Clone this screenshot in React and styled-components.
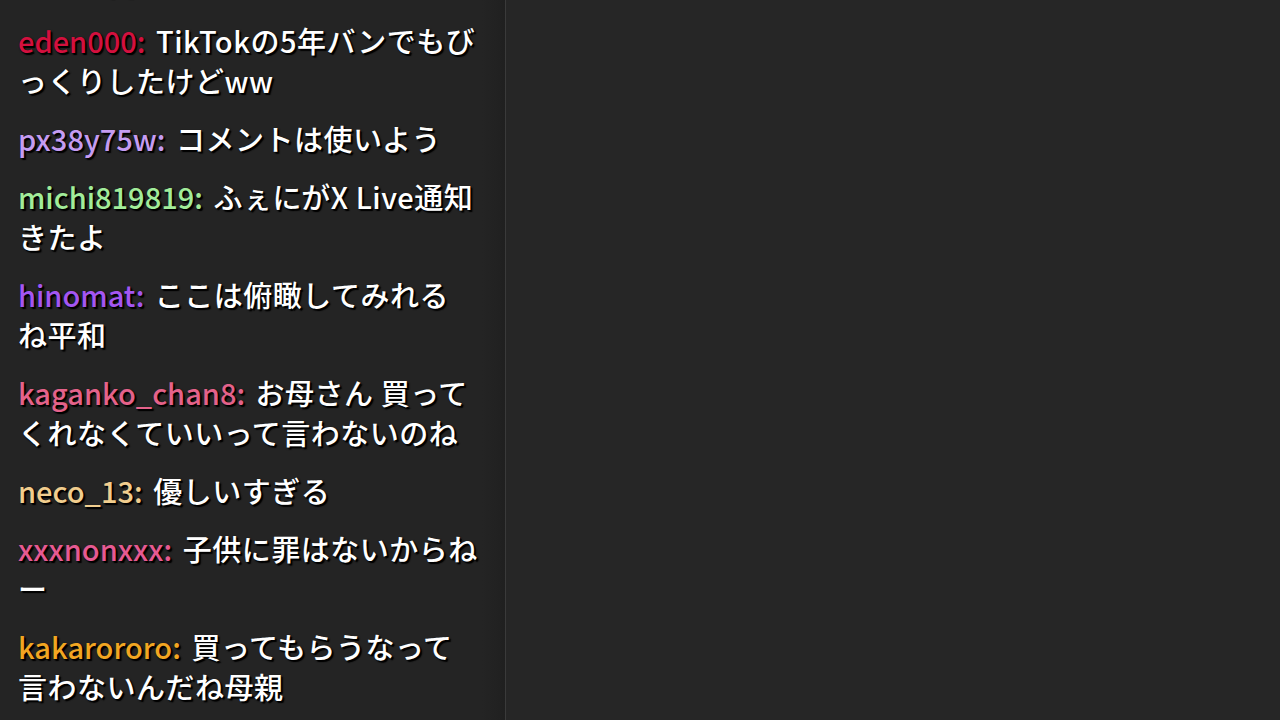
import React from "react";
import styled, { createGlobalStyle } from "styled-components";

const Global = createGlobalStyle`
  html, body { margin: 0; padding: 0; height: 100%; background: #262626; }
  #root { height: 100%; }
`;

const Page = styled.div`
  display: flex;
  width: 1280px;
  height: 720px;
  overflow: hidden;
  background: #262626;
  font-family: "Noto Sans CJK JP", "Noto Sans", sans-serif;
`;

const ChatPanel = styled.div`
  width: 506px;
  flex: none;
  display: flex;
  flex-direction: column;
  justify-content: flex-end;
  padding: 0 26.9px 5px 18px;
  box-sizing: border-box;
  background: linear-gradient(to right, #242424 0, #242424 482px, #212121 500px, #1f1f1f 506px);
  border-right: 1px solid #3a3a3a;
  overflow: hidden;
`;

const Stage = styled.div`
  flex: 1;
  background: #262626;
`;

const Message = styled.div`
  padding: 9px 0;
  font-size: 29px;
  line-height: 40px;
  font-weight: 500;
  letter-spacing: 0.5px;
  color: #ffffff;
  text-shadow: 2px 2px 1px #000, 1px 1px 2px #000;
  line-break: anywhere;
  flex: none;
`;

const Name = styled.span`
  color: ${(p) => p.$color};
  letter-spacing: 0;
  margin-right: 4px;
`;

const messages = [
  { name: null, color: "#fff", text: "すぐに倒される" },
  { name: "eden000", color: "#d3103e", text: "TikTokの5年バンでもびっくりしたけどww" },
  { name: "px38y75w", color: "#c59cf2", text: "コメントは使いよう" },
  { name: "michi819819", color: "#a2ec9a", text: "ふぇにがX Live通知きたよ" },
  { name: "hinomat", color: "#a456f2", text: "ここは俯瞰してみれるね平和" },
  { name: "kaganko_chan8", color: "#e4628a", text: "お母さん 買ってくれなくていいって言わないのね" },
  { name: "neco_13", color: "#f1cd8e", text: "優しいすぎる" },
  { name: "xxxnonxxx", color: "#e65a92", text: "子供に罪はないからねー" },
  { name: "kakarororo", color: "#f2a622", text: "買ってもらうなって言わないんだね母親" },
];

export default function App() {
  return (
    <>
      <Global />
      <Page>
        <ChatPanel>
          {messages.map((m, i) => (
            <Message key={i}>
              {m.name && <Name $color={m.color}>{m.name}: </Name>}
              {m.text}
            </Message>
          ))}
        </ChatPanel>
        <Stage />
      </Page>
    </>
  );
}
